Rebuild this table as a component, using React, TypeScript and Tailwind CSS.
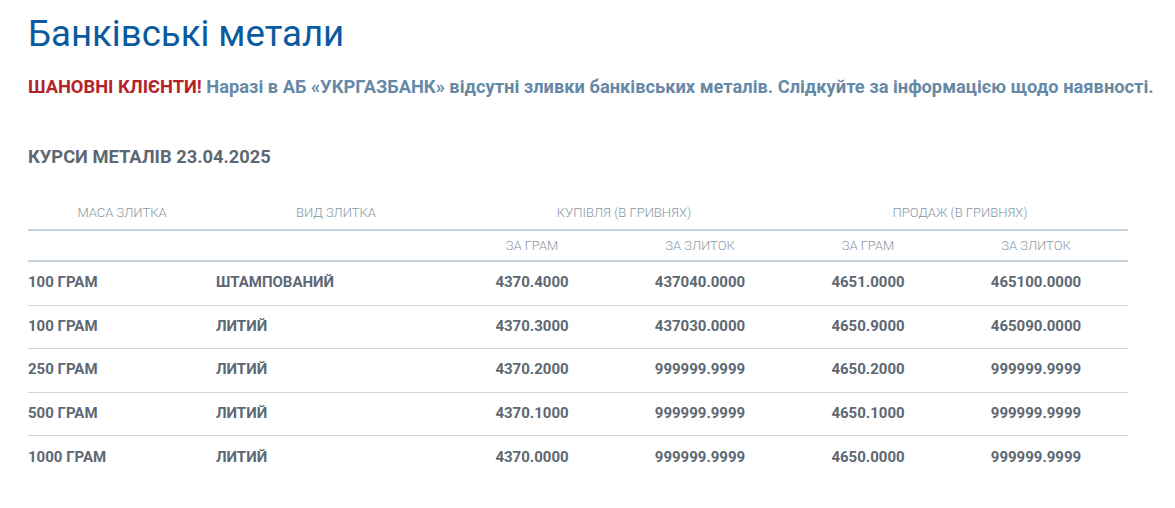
import React from "react";

const rows = [
  ["100 ГРАМ", "ШТАМПОВАНИЙ", "4370.4000", "437040.0000", "4651.0000", "465100.0000"],
  ["100 ГРАМ", "ЛИТИЙ", "4370.3000", "437030.0000", "4650.9000", "465090.0000"],
  ["250 ГРАМ", "ЛИТИЙ", "4370.2000", "999999.9999", "4650.2000", "999999.9999"],
  ["500 ГРАМ", "ЛИТИЙ", "4370.1000", "999999.9999", "4650.1000", "999999.9999"],
  ["1000 ГРАМ", "ЛИТИЙ", "4370.0000", "999999.9999", "4650.0000", "999999.9999"],
];

export default function App() {
  return (
    <div
      className="min-h-[508px] bg-white px-[28px] pt-[12px]"
      style={{ fontFamily: "Roboto, 'Noto Sans', sans-serif" }}
    >
      <h1 className="text-[36.6px] leading-[44px] font-normal text-[#0a5aa0]">Банківські метали</h1>
      <p className="mt-[19px] text-[18.3px] leading-[24px] font-bold text-[#6589a6] whitespace-nowrap">
        <span className="text-[#b5232a]">ШАНОВНІ КЛІЄНТИ!</span> Наразі в АБ «УКРГАЗБАНК» відсутні зливки банківських металів. Слідкуйте за інформацією щодо наявності.
      </p>
      <h2 className="mt-[46px] text-[18.3px] leading-[24px] font-bold text-[#5d6873]">КУРСИ МЕТАЛІВ 23.04.2025</h2>

      <div className="mt-[28px] w-[1100px]">
        <div className="grid grid-cols-[188px_240px_336px_336px] h-[34px] items-center border-b-2 border-[#c5d3db] text-[13px] font-light text-[#8797a3]">
          <div className="text-center">МАСА ЗЛИТКА</div>
          <div className="text-center">ВИД ЗЛИТКА</div>
          <div className="text-center">КУПІВЛЯ (В ГРИВНЯХ)</div>
          <div className="text-center">ПРОДАЖ (В ГРИВНЯХ)</div>
        </div>
        <div className="grid grid-cols-[188px_240px_168px_168px_168px_168px] h-[31px] items-center border-b-2 border-[#c5d3db] text-[13px] font-light text-[#8797a3]">
          <div />
          <div />
          <div className="text-center pr-4">ЗА ГРАМ</div>
          <div className="text-center pr-4">ЗА ЗЛИТОК</div>
          <div className="text-center pr-4">ЗА ГРАМ</div>
          <div className="text-center pr-4">ЗА ЗЛИТОК</div>
        </div>
        {rows.map((r, i) => (
          <div
            key={i}
            className={`grid grid-cols-[188px_240px_168px_168px_168px_168px] h-[43.5px] items-center pb-[2px] text-[15px] font-bold text-[#5d6873] ${
              i < rows.length - 1 ? "border-b border-[#cbd8e0]" : ""
            }`}
          >
            <div>{r[0]}</div>
            <div>{r[1]}</div>
            <div className="text-center pr-4">{r[2]}</div>
            <div className="text-center pr-4">{r[3]}</div>
            <div className="text-center pr-4">{r[4]}</div>
            <div className="text-center pr-4">{r[5]}</div>
          </div>
        ))}
      </div>
    </div>
  );
}
